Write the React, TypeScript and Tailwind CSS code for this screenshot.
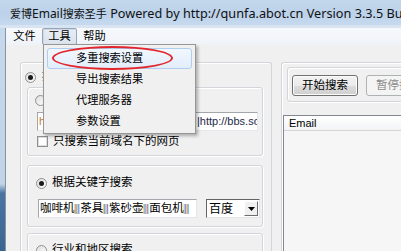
import React from 'react';

const sans = "[font-family:'Liberation_Sans','Noto_Sans_CJK_SC',sans-serif]";

function Radio({ on }: { on?: boolean }) {
  return (
    <span className="flex h-[11px] w-[11px] shrink-0 items-center justify-center rounded-full border border-[#8e8f8f] bg-[linear-gradient(135deg,#dcdcdc,#ffffff)]">
      {on && <span className="h-[5px] w-[5px] rounded-full bg-[#1a1a1a]" />}
    </span>
  );
}

function Bars() {
  return (
    <span className="text-[11px] text-[#3a74c4] [font-family:'Liberation_Sans',sans-serif] [text-shadow:-1px_0_#f3b24a]">||</span>
  );
}

function AppIcon() {
  return (
    <svg width="18" height="18" viewBox="0 0 18 18">
      <polygon points="1.5,10 6,16.5 16.5,10.5 16.5,7.5 6,13.5 1.5,7" fill="#a8741c" stroke="#5a3a0a" strokeWidth="0.8" />
      <polygon points="1.5,7 11.5,2 16.5,7.5 6,13.5" fill="#f0c452" stroke="#5a3a0a" strokeWidth="0.8" />
      <path d="M4.5 7.5 L11 4.5 M6 9.5 L13 6.2 M8 11 L14 8" stroke="#7a5212" strokeWidth="0.9" />
      <path d="M3 4 L6 2.5 L7 4" stroke="#c8382a" strokeWidth="1" fill="none" />
    </svg>
  );
}

function TitleBar() {
  return (
    <div className="flex h-[25px] items-center bg-[linear-gradient(to_bottom,#c4d7eb,#bcd2ea_55%,#c6d9ee)] pl-[5px] pt-[2px]">
      <AppIcon />
      <div className="ml-[5px] whitespace-nowrap text-[12px] text-[#111] [font-family:'Noto_Sans','Noto_Sans_CJK_SC',sans-serif]">
        <span className="text-[11px]">爱博</span>
        Email
        <span className="text-[11px]">搜索圣手</span>
        <span className="text-[12.7px]"> Powered by http://qunfa.abot.cn Version 3.3.5 Build 20101128</span>
      </div>
    </div>
  );
}

function MenuBar() {
  return (
    <div className="flex h-[17px] bg-[linear-gradient(to_bottom,#f7f9fc,#eff3f8)] pl-[1px] text-[11.2px]">
      <div className="flex w-[35px] items-center justify-center">文件</div>
      <div className="flex w-[35px] items-center justify-center rounded-[2px] border border-[#97a5b8] bg-[linear-gradient(to_bottom,#e8edf3,#dbe3ed)] shadow-[inset_1px_1px_0_#cfd7e2]">
        工具
      </div>
      <div className="flex w-[35px] items-center justify-center">帮助</div>
    </div>
  );
}

function Group({ children, className }: { children: React.ReactNode; className?: string }) {
  return (
    <div
      className={`rounded-[3px] border border-[#d2d6da] shadow-[inset_1px_1px_0_#ffffff,1px_1px_0_#ffffff] ${className ?? ''}`}
    >
      {children}
    </div>
  );
}

function LeftPanel() {
  return (
    <div className="ml-[14px] h-[200px] w-[252px] shrink-0 rounded-t-[3px] border-x border-t border-[#d2d6da] shadow-[inset_1px_1px_0_#ffffff]">
      <div className="flex h-[14px] items-center gap-[6px] pl-[4px] mt-[7px]">
        <Radio on />
        <span>按网址搜索</span>
      </div>

      <Group className="ml-[6px] mt-[3px] w-[236px] pb-[6px]">
        <div className="mt-[5px] flex h-[14px] items-center gap-[6px] pl-[7px]">
          <Radio />
          <span>指定网址搜索</span>
        </div>
        <div className="ml-[9px] mt-[5px] flex h-[19px] w-[221px] items-center overflow-hidden whitespace-nowrap border border-b-[#e3e6ea] border-l-[#a3a6ab] border-r-[#e3e6ea] border-t-[#a3a6ab] bg-white pl-[1px] text-[11px] [font-family:'Liberation_Sans',sans-serif]">
          <span className="inline-block w-[158px] shrink-0 overflow-hidden text-[#c8782a]">http://www.abot.cn/index.html</span>
          <span className="text-[#1c2a48]">|http://bbs.sohu.com</span>
        </div>
        <div className="ml-[9px] mt-[3px] flex h-[15px] items-center gap-[5px]">
          <span className="h-[11px] w-[11px] shrink-0 border border-[#8e8f8f] bg-white shadow-[inset_0_0_0_1px_#dedede]" />
          <span>只搜索当前域名下的网页</span>
        </div>
      </Group>

      <Group className="ml-[6px] mt-[9px] w-[236px] pb-[8px]">
        <div className="mt-[10px] flex h-[14px] items-center gap-[5px] pl-[8px]">
          <Radio on />
          <span>根据关键字搜索</span>
        </div>
        <div className="mt-[9px] flex pl-[10px]">
          <div className="flex h-[19px] w-[159px] items-center overflow-hidden whitespace-nowrap border border-b-[#e3e6ea] border-l-[#a3a6ab] border-r-[#e3e6ea] border-t-[#a3a6ab] bg-white pl-[1px]">
            咖啡机<Bars />茶具<Bars />紫砂壶<Bars />面包机<Bars />
          </div>
          <div className="ml-[9px] flex h-[19px] w-[54px] border border-b-[#e3e3e3] border-l-[#646464] border-r-[#e3e3e3] border-t-[#646464] bg-white">
            <span className="flex flex-1 items-center pl-[2px] text-[12px]">百度</span>
            <span className="my-[1px] mr-[1px] flex w-[14px] items-center justify-center border border-b-[#6d6d6d] border-l-white border-r-[#6d6d6d] border-t-white bg-[#f0f0f0]">
              <svg width="7" height="4" viewBox="0 0 7 4">
                <polygon points="0,0 7,0 3.5,4" fill="#000" />
              </svg>
            </span>
          </div>
        </div>
      </Group>

      <Group className="ml-[6px] mt-[6px] h-[40px] w-[236px]">
        <div className="mt-[9px] flex h-[14px] items-center gap-[5px] pl-[8px]">
          <Radio />
          <span>行业和地区搜索</span>
        </div>
      </Group>
    </div>
  );
}

function RightPanel() {
  return (
    <div className="ml-[9px] h-[200px] w-[200px] shrink-0 rounded-tl-[3px] border-l border-t border-[#d2d6da] shadow-[inset_1px_1px_0_#ffffff]">
      <Group className="ml-[5px] mt-[4px] flex gap-[8px] pb-[5px] pl-[4px] pt-[7px]">
        <button className="flex h-[21px] w-[66px] items-center justify-center rounded-[3px] border border-[#707070] bg-[linear-gradient(to_bottom,#f2f2f2_0%,#ebebeb_50%,#dddddd_51%,#cfcfcf_100%)] shadow-[inset_0_0_0_1px_#fcfcfc]">
          开始搜索
        </button>
        <button className="flex h-[21px] w-[66px] items-center justify-center rounded-[3px] border border-[#adb2b5] bg-[#f4f4f4] text-[#8a8a8a]">
          暂停搜索
        </button>
      </Group>
      <div className="ml-[1px] mt-[13px] h-[140px] border-l border-t border-[#828790] bg-[#f6f6f6]">
        <div className="flex h-[15px] items-center border-b border-[#d5d5d5] bg-[linear-gradient(to_bottom,#ffffff,#f3f4f6)] pl-[5px] text-[11px] [font-family:'Liberation_Sans',sans-serif]">
          Email
        </div>
      </div>
    </div>
  );
}

function Dropdown() {
  const items = ['多重搜索设置', '导出搜索结果', '代理服务器', '参数设置'];
  return (
    <div className="absolute left-[43px] top-[44px] w-[153px] border border-[#979797] bg-[#f0f0f0] px-[3px] pb-[1px] pt-[3px] text-[11.2px] shadow-[2px_2px_3px_rgba(0,0,0,0.28)]">
      {items.map((label, i) => (
        <div
          key={label}
          className={`flex h-[21px] items-center pl-[28px] ${
            i === 0
              ? 'rounded-[3px] border border-[#aecdf0] bg-[linear-gradient(to_bottom,#f1f7fe,#e2eefb)]'
              : 'border border-transparent'
          }`}
        >
          {label}
        </div>
      ))}
    </div>
  );
}

export default function App() {
  return (
    <div className={`relative h-[251px] w-[401px] overflow-hidden bg-[#f0f0f0] text-[11.5px] text-black ${sans}`}>
      <TitleBar />
      <div className="h-[3px] bg-[#d8e4f1]" />
      <div className="flex h-[223px]">
        <div className="w-[6px] shrink-0 border-r border-[#8593a6] bg-[linear-gradient(to_bottom,#c6d8ec_0%,#c2d3e6_70%,#4a75a2_74%,#3b6491_100%)]" />
        <div className="flex min-w-0 flex-1 flex-col">
          <MenuBar />
          <div className="flex pt-[17px]">
            <LeftPanel />
            <RightPanel />
          </div>
        </div>
      </div>

      <Dropdown />
      <div className="absolute left-[52px] top-[46px] h-[24px] w-[121px] rounded-[50%] border-2 border-[#e3262b]" />
    </div>
  );
}
